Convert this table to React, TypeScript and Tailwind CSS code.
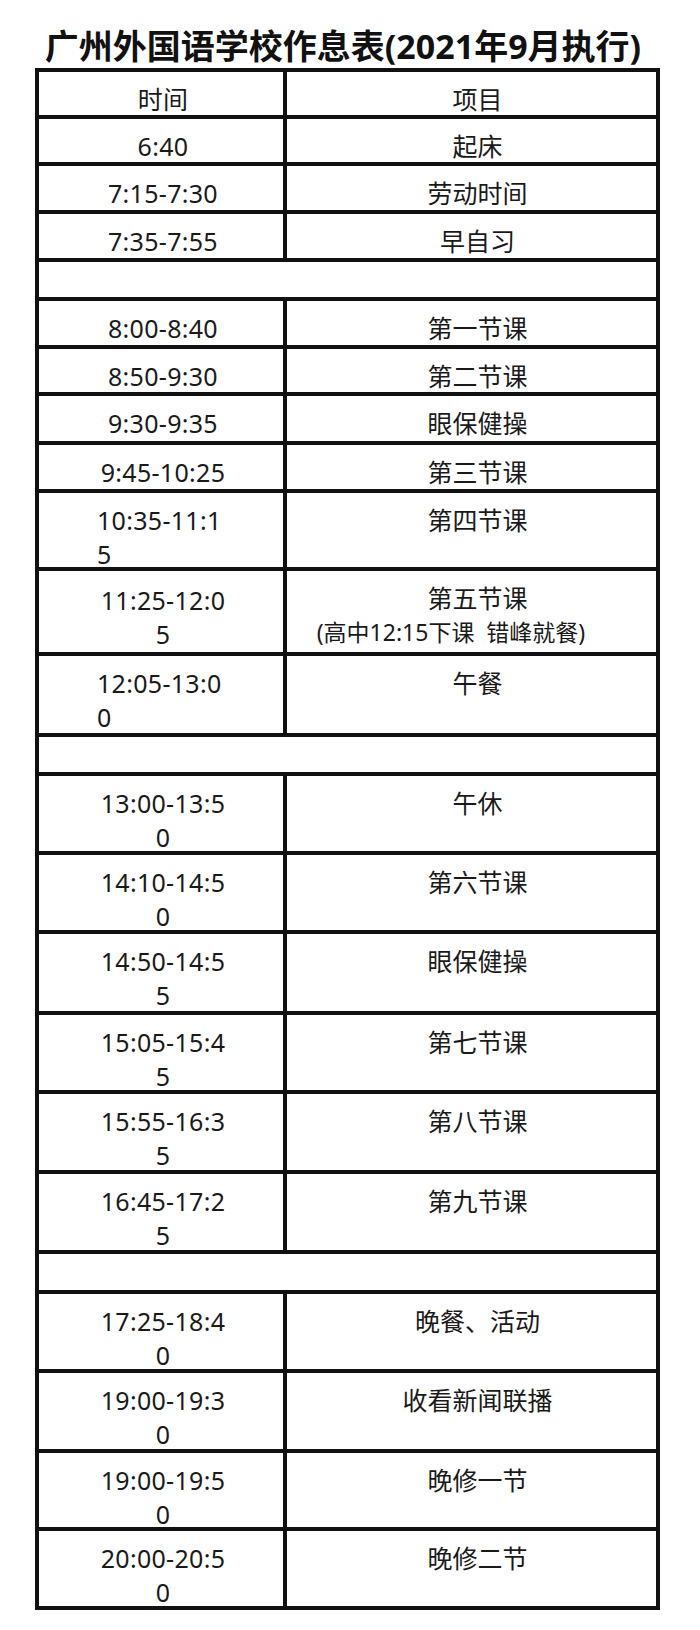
import React from 'react';

type Row = {
  h: string;
  t?: string[];
  item?: string;
  sub?: string;
  left?: boolean;
  extraTop?: boolean;
  empty?: boolean;
};

const rows: Row[] = [
  { h: 'h-[47px]', t: ['时间'], item: '项目' },
  { h: 'h-[47px]', t: ['6:40'], item: '起床' },
  { h: 'h-[48px]', t: ['7:15-7:30'], item: '劳动时间' },
  { h: 'h-[48px]', t: ['7:35-7:55'], item: '早自习' },
  { h: 'h-[39px]', empty: true },
  { h: 'h-[48px]', t: ['8:00-8:40'], item: '第一节课' },
  { h: 'h-[47px]', t: ['8:50-9:30'], item: '第二节课' },
  { h: 'h-[49px]', t: ['9:30-9:35'], item: '眼保健操' },
  { h: 'h-[48px]', t: ['9:45-10:25'], item: '第三节课' },
  { h: 'h-[78px]', t: ['10:35-11:1', '5'], item: '第四节课', left: true },
  { h: 'h-[85px]', t: ['11:25-12:0', '5'], item: '第五节课', sub: '(高中12:15下课  错峰就餐)', extraTop: true },
  { h: 'h-[81px]', t: ['12:05-13:0', '0'], item: '午餐', left: true },
  { h: 'h-[39px]', empty: true },
  { h: 'h-[79px]', t: ['13:00-13:5', '0'], item: '午休' },
  { h: 'h-[79px]', t: ['14:10-14:5', '0'], item: '第六节课' },
  { h: 'h-[81px]', t: ['14:50-14:5', '5'], item: '眼保健操' },
  { h: 'h-[79px]', t: ['15:05-15:4', '5'], item: '第七节课' },
  { h: 'h-[80px]', t: ['15:55-16:3', '5'], item: '第八节课' },
  { h: 'h-[80px]', t: ['16:45-17:2', '5'], item: '第九节课' },
  { h: 'h-[40px]', empty: true },
  { h: 'h-[79px]', t: ['17:25-18:4', '0'], item: '晚餐、活动' },
  { h: 'h-[80px]', t: ['19:00-19:3', '0'], item: '收看新闻联播' },
  { h: 'h-[78px]', t: ['19:00-19:5', '0'], item: '晚修一节' },
  { h: 'h-[79px]', t: ['20:00-20:5', '0'], item: '晚修二节' },
];

export default function App() {
  return (
    <div
      className="w-[700px] h-[1630px] bg-white text-[#1a1a1a]"
      style={{ fontFamily: '"Noto Sans", "Noto Sans CJK SC", sans-serif' }}
    >
      <div className="h-[68px] pt-[24px] pr-[14px] text-center text-[34px] leading-[44px] font-bold text-[#111] whitespace-nowrap">
        广州外国语学校作息表(2021年9月执行)
      </div>
      <div className="ml-[35px] w-[625px] border-x-4 border-t-4 border-[#111]">
        {rows.map((r, i) =>
          r.empty ? (
            <div key={i} className={`${r.h} border-b-4 border-[#111]`} />
          ) : (
            <div key={i} className={`${r.h} flex border-b-4 border-[#111]`}>
              <div
                className={`w-[248px] shrink-0 border-r-4 border-[#111] text-[25px] leading-[34px] tracking-[0.3px] ${
                  r.left ? 'pl-[58px] text-left' : 'pl-[4px] text-center'
                } ${r.extraTop ? 'pt-[12px]' : 'pt-[10px]'}`}
              >
                {r.t!.map((line, j) => (
                  <div key={j}>{line}</div>
                ))}
              </div>
              <div className="flex-1 pl-[12px] pt-[10px] text-center text-[25px] leading-[34px]">
                <div>{r.item}</div>
                {r.sub && (
                  <div className="pr-[53px] text-[23px] leading-[34px] whitespace-pre">{r.sub}</div>
                )}
              </div>
            </div>
          )
        )}
      </div>
    </div>
  );
}
